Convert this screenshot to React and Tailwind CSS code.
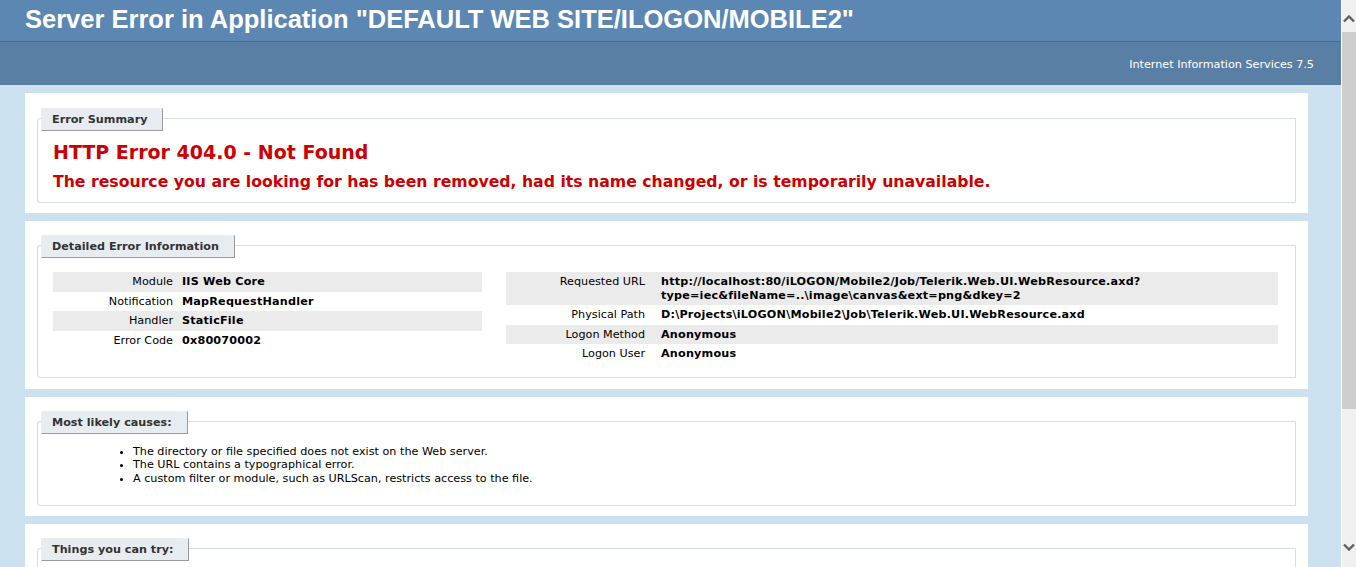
import React from 'react';

const detailsLeft = [
  ['Module', 'IIS Web Core'],
  ['Notification', 'MapRequestHandler'],
  ['Handler', 'StaticFile'],
  ['Error Code', '0x80070002'],
];

const detailsRight = [
  [
    'Requested URL',
    <>
      http://localhost:80/iLOGON/Mobile2/Job/Telerik.Web.UI.WebResource.axd?
      <br />
      type=iec&amp;fileName=..\image\canvas&amp;ext=png&amp;dkey=2
    </>,
  ],
  ['Physical Path', 'D:\\Projects\\iLOGON\\Mobile2\\Job\\Telerik.Web.UI.WebResource.axd'],
  ['Logon Method', 'Anonymous'],
  ['Logon User', 'Anonymous'],
];

const causes = [
  'The directory or file specified does not exist on the Web server.',
  'The URL contains a typographical error.',
  'A custom filter or module, such as URLScan, restricts access to the file.',
];

function Legend({ children }) {
  return (
    <div className="-mt-[11px] -ml-[12px] w-fit border-t border-l border-t-[#ededed] border-l-[#ededed] border-r border-b border-r-[#9a9a9a] border-b-[#9a9a9a] bg-[#e7ecf0] pt-[4px] pb-[4px] pl-[10px] pr-[15px] text-[11.2px] font-bold leading-[13px] text-[#333333]">
      {children}
    </div>
  );
}

function Box({ title, className = '', children }) {
  return (
    <div className={`mx-[2px] rounded-l-[3px] border border-[#d5dee6] px-[15px] ${className}`}>
      <Legend>{title}</Legend>
      {children}
    </div>
  );
}

function DetailTable({ rows, labelWidth, labelPad, className }) {
  return (
    <div className={className}>
      {rows.map(([label, value], i) => (
        <div key={label} className={`flex ${i % 2 === 0 ? 'bg-[#ebebeb]' : ''}`}>
          <div
            className={`${labelWidth} ${labelPad} shrink-0 py-[3px] text-right text-black`}
          >
            {label}
          </div>
          <div className="py-[3px] font-bold tracking-[0.2px] text-black">{value}</div>
        </div>
      ))}
    </div>
  );
}

function Chevron({ down }) {
  return (
    <svg width="12" height="8" viewBox="0 0 12 8" className="block">
      <path
        d={down ? 'M1 1.5 L6 6.5 L11 1.5' : 'M1 6.5 L6 1.5 L11 6.5'}
        fill="none"
        stroke="#606060"
        strokeWidth="2.4"
      />
    </svg>
  );
}

export default function App() {
  return (
    <div className="flex h-[567px] w-[1356px] overflow-hidden bg-[#cbe1ef] font-['DejaVu_Sans',Verdana,sans-serif] text-[11.2px] leading-[13.5px]">
      <div className="w-[1341px] shrink-0">
        <div className="h-[41px] bg-[#5c87b2] pl-[25px] pt-[5px]">
          <h1 className="font-['Liberation_Sans',Arial,sans-serif] text-[25.5px] font-bold leading-[29px] text-white">
            Server Error in Application "DEFAULT WEB SITE/ILOGON/MOBILE2"
          </h1>
        </div>
        <div className="flex h-[44px] items-center justify-end border-t border-[#4a6c8e] bg-[#5a7fa5] pr-[27px] pt-[3px] text-white">
          Internet Information Services 7.5
        </div>

        <div className="ml-[25px] mt-[8px] flex w-[1283px] flex-col gap-[8px]">
          <div className="bg-white px-[10px] pt-[25px] pb-[10px]">
            <Box title="Error Summary" className="pb-[11px]">
              <h2 className="mt-[10px] text-[19px] font-bold leading-[22px] text-[#cc0000]">
                HTTP Error 404.0 - Not Found
              </h2>
              <h3 className="mt-[10px] text-[15.7px] font-bold leading-[18px] text-[#cc0000]">
                The resource you are looking for has been removed, had its name changed, or is temporarily unavailable.
              </h3>
            </Box>
          </div>

          <div className="bg-white px-[10px] pt-[24px] pb-[11px]">
            <Box title="Detailed Error Information" className="pb-[13px]">
              <div className="mt-[14px] flex gap-[24px]">
                <DetailTable
                  rows={detailsLeft}
                  labelWidth="w-[129px]"
                  labelPad="pr-[9px]"
                  className="w-[429px] shrink-0"
                />
                <DetailTable
                  rows={detailsRight}
                  labelWidth="w-[155px]"
                  labelPad="pr-[16px]"
                  className="w-[772px] shrink-0"
                />
              </div>
            </Box>
          </div>

          <div className="bg-white px-[10px] pt-[24px] pb-[10px]">
            <Box title="Most likely causes:" className="pb-[20px]">
              <ul className="mt-[11px] list-disc pl-[80px] text-black">
                {causes.map((c) => (
                  <li key={c}>{c}</li>
                ))}
              </ul>
            </Box>
          </div>

          <div className="bg-white px-[10px] pt-[24px] pb-[10px]">
            <Box title="Things you can try:" className="pb-[40px]">
              <div className="h-[40px]" />
            </Box>
          </div>
        </div>
      </div>

      {/* window scrollbar */}
      <div className="flex w-[15px] shrink-0 flex-col border-l border-white bg-[#f0f0f0]">
        <div className="flex h-[32px] justify-center pt-[15px]">
          <Chevron />
        </div>
        <div className="h-[377px] bg-[#cdcdcd]" />
        <div className="flex-1" />
        <div className="flex h-[32px] justify-center pt-[8px]">
          <Chevron down />
        </div>
      </div>
    </div>
  );
}
